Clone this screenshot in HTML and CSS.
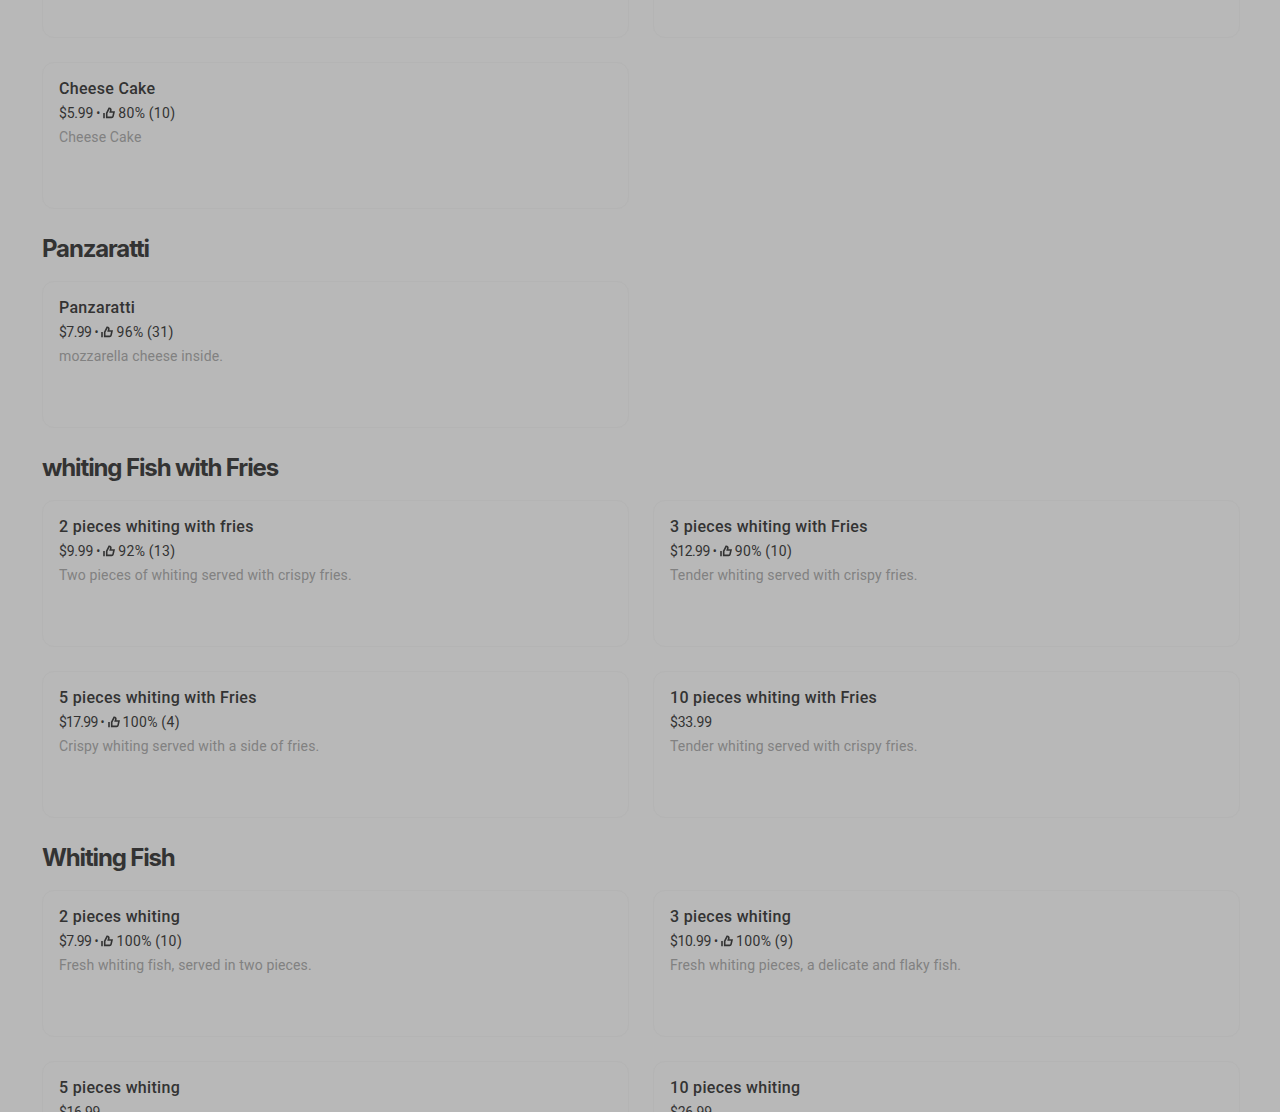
FILE: index.html
```
<!DOCTYPE html>
<html lang="en">
<head>
<meta charset="utf-8">
<title>Menu</title>
<link rel="stylesheet" href="styles.css">
</head>
<body>
<svg class="defs" aria-hidden="true"><symbol id="thumb" viewBox="0 0 12 12"><path d="M1 6V11.2M3.7 6.1L6.1 1.3C7.6 1.3 8.1 2.2 7.8 3.3L7.3 5H11L10.1 9.1Q9.8 10.4 8.6 10.4H3.7Z" fill="none" stroke="currentColor" stroke-width="1.6"/></symbol></svg>
<main class="menu">
<section class="grid first">
<article class="card"></article>
<article class="card"></article>
<article class="card"><h3>Cheese Cake</h3><p class="price"><span class="amount">$5.99</span><span class="dot">•</span><svg class="thumb"><use href="#thumb"/></svg><span class="rating">80% (10)</span></p><p class="desc">Cheese Cake</p></article>
</section>
<h2>Panzaratti</h2>
<section class="grid">
<article class="card"><h3>Panzaratti</h3><p class="price"><span class="amount tight">$7.99</span><span class="dot">•</span><svg class="thumb"><use href="#thumb"/></svg><span class="rating">96% (31)</span></p><p class="desc">mozzarella cheese inside.</p></article>
</section>
<h2 class="long">whiting Fish with Fries</h2>
<section class="grid">
<article class="card"><h3>2 pieces whiting with fries</h3><p class="price"><span class="amount">$9.99</span><span class="dot">•</span><svg class="thumb"><use href="#thumb"/></svg><span class="rating">92% (13)</span></p><p class="desc">Two pieces of whiting served with crispy fries.</p></article>
<article class="card"><h3>3 pieces whiting with Fries</h3><p class="price"><span class="amount tight">$12.99</span><span class="dot">•</span><svg class="thumb"><use href="#thumb"/></svg><span class="rating">90% (10)</span></p><p class="desc">Tender whiting served with crispy fries.</p></article>
<article class="card"><h3>5 pieces whiting with Fries</h3><p class="price"><span class="amount tightest">$17.99</span><span class="dot">•</span><svg class="thumb"><use href="#thumb"/></svg><span class="rating">100% (4)</span></p><p class="desc">Crispy whiting served with a side of fries.</p></article>
<article class="card"><h3>10 pieces whiting with Fries</h3><p class="price"><span class="amount">$33.99</span></p><p class="desc">Tender whiting served with crispy fries.</p></article>
</section>
<h2>Whiting Fish</h2>
<section class="grid">
<article class="card"><h3>2 pieces whiting</h3><p class="price"><span class="amount tight">$7.99</span><span class="dot">•</span><svg class="thumb"><use href="#thumb"/></svg><span class="rating">100% (10)</span></p><p class="desc">Fresh whiting fish, served in two pieces.</p></article>
<article class="card"><h3>3 pieces whiting</h3><p class="price"><span class="amount snug">$10.99</span><span class="dot">•</span><svg class="thumb"><use href="#thumb"/></svg><span class="rating">100% (9)</span></p><p class="desc">Fresh whiting pieces, a delicate and flaky fish.</p></article>
<article class="card"><h3>5 pieces whiting</h3><p class="price"><span class="amount snug">$16.99</span></p></article>
<article class="card"><h3>10 pieces whiting</h3><p class="price"><span class="amount">$26.99</span></p></article>
</section>
</main>
</body>
</html>
```
FILE: styles.css
```
* { box-sizing: border-box; }
body { margin: 0; height: 1112px; overflow: hidden; background: #b8b8b8; color: #333; font-family: Roboto, "Liberation Sans", sans-serif; }
.defs { display: block; width: 0; height: 0; }
.menu { width: 1198px; margin-left: 42px; }
.grid { display: grid; grid-template-columns: 1fr 1fr; grid-auto-rows: 147px; gap: 24px; }
.first { margin-top: -109px; }
.card { border: 1px solid #b4b4b4; border-radius: 12px; padding: 14px 16px; }
h2, h3, p { margin: 0; white-space: nowrap; }
h2 { height: 72px; padding-top: 24px; font: 700 24px/32px Inter, "Liberation Sans", sans-serif; letter-spacing: -1.15px; }
h3 { font-size: 16px; font-weight: 500; line-height: 24px; letter-spacing: 0.31px; }
.price, .desc { font-size: 14px; line-height: 24px; }
.price { display: flex; align-items: center; height: 24px; }
.amount { letter-spacing: -0.2px; }
.snug { letter-spacing: -0.35px; }
.tight { letter-spacing: -0.55px; }
.tightest { letter-spacing: -0.75px; }
.dot { width: 5px; margin: 0 2px 0 3px; font-size: 12px; letter-spacing: 0; }
.thumb { width: 12px; height: 12px; margin-right: 3px; }
.rating { letter-spacing: 0.4px; word-spacing: -0.6px; }
.desc { color: #818181; letter-spacing: 0.15px; }
.long { letter-spacing: -1.12px; }
```
